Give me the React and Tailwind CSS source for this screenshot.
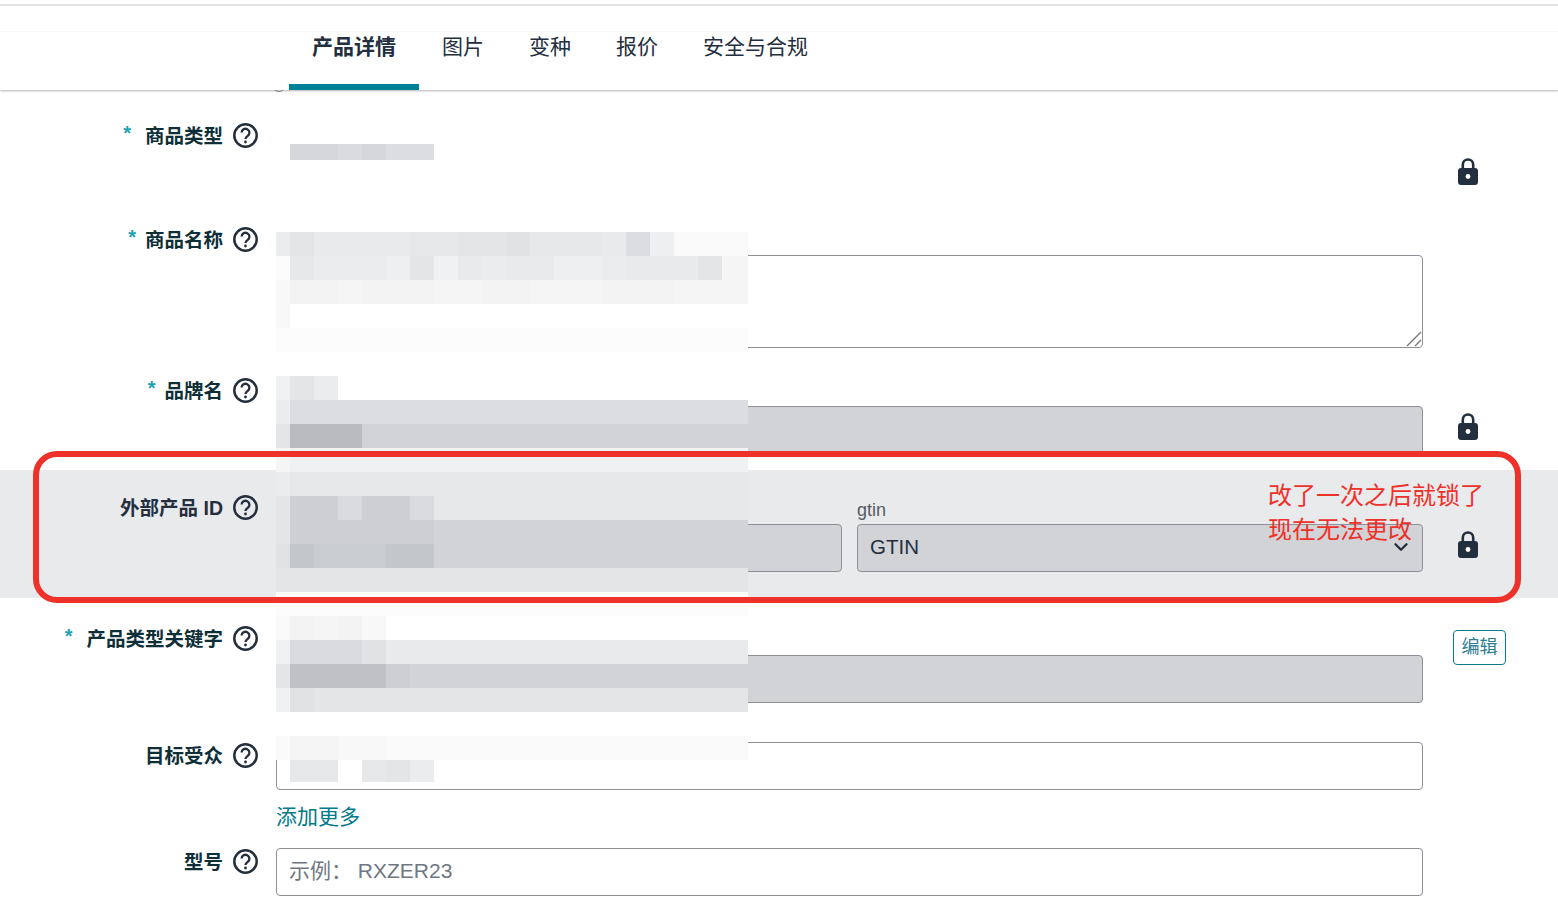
import React from 'react';
import { ChevronDown } from 'lucide-react';

// one letter = one mosaic cell of the blurred-out parts
const shades = {
  '.': 'bg-transparent',
  w: 'bg-[#ffffff]',
  x: 'bg-[#fcfcfc]',
  y: 'bg-[#fafafb]',
  z: 'bg-[#f8f8f9]',
  u: 'bg-[#f5f5f6]',
  v: 'bg-[#f3f3f4]',
  t: 'bg-[#f0f1f3]',
  s: 'bg-[#eeeff1]',
  r: 'bg-[#ebecee]',
  q: 'bg-[#e9eaec]',
  p: 'bg-[#e7e8ea]',
  o: 'bg-[#e4e5e7]',
  n: 'bg-[#e1e2e4]',
  m: 'bg-[#dcdde0]',
  l: 'bg-[#dadbde]',
  k: 'bg-[#d6d7da]',
  j: 'bg-[#d1d3d7]',
  i: 'bg-[#cdcfd2]',
  h: 'bg-[#c9ccd0]',
  g: 'bg-[#c3c6ca]',
  f: 'bg-[#bfc1c6]',
  e: 'bg-[#b9bbc0]',
};

const Mosaic = ({ rows, className }) => (
  <div className={`absolute left-[276px] w-[472px] overflow-hidden z-20 ${className}`}>
    {rows.map((row, i) => (
      <div key={i} className="flex h-6">
        {row.split('').map((c, j) => (
          <div
            key={j}
            className={`${shades[c]} ${j === 0 ? 'w-[14px]' : j === 19 ? 'flex-1' : 'w-6'}`}
          />
        ))}
      </div>
    ))}
  </div>
);

const Lock = () => (
  <svg width="20" height="27" viewBox="0 0 20 27" className="block">
    <path d="M4.8 11V6.7a5.2 5.2 0 0 1 10.4 0V11" fill="none" stroke="#232f3e" strokeWidth="2.6" />
    <rect x="0" y="10" width="20" height="17" rx="3" fill="#232f3e" />
    <circle cx="10" cy="18.5" r="2.4" fill="#fff" />
  </svg>
);

const Help = () => (
  <svg width="27" height="27" viewBox="0 0 27 27" className="ml-[9px] shrink-0">
    <circle cx="13.5" cy="13.5" r="11.2" fill="none" stroke="#232f3e" strokeWidth="2.5" />
    <path
      d="M9.6 10.6a3.9 3.9 0 1 1 6.2 3.2c-1.4 1-2.3 1.6-2.3 3.2"
      fill="none"
      stroke="#232f3e"
      strokeWidth="2.3"
    />
    <circle cx="13.5" cy="20" r="1.4" fill="#232f3e" />
  </svg>
);

const Label = ({ text, required, gap, color = 'text-[#0f2f38]' }) => (
  <div className="flex w-[259px] h-[27px] items-center justify-end">
    {required && (
      <span className={`text-[#1aa3b3] text-[20px] font-bold leading-[20px] -mt-[6px] ${gap}`}>*</span>
    )}
    <span className={`text-[19.5px] font-bold leading-[27px] mt-[2px] whitespace-nowrap ${color}`}>{text}</span>
    <Help />
  </div>
);

const inputBase = 'h-12 border border-[#8d9096] rounded-[4px]';

const Tab = ({ children, active }) => (
  <div
    className={`h-[58px] leading-[30px] text-[21px] text-[#232f3e] border-b-[6px] ${
      active ? 'px-[23px] font-bold border-[#008296]' : 'pl-[23px] pr-[22px] border-transparent'
    }`}
  >
    {children}
  </div>
);

export default function App() {
  return (
    <div className="relative w-[1558px] h-[904px] overflow-hidden bg-white font-['Liberation_Sans','Noto_Sans_CJK_SC',sans-serif]">
      {/* peeks out from under the tab bar */}
      <div className="absolute left-[272px] top-[78px] w-[14px] h-[14px] rounded-full border border-[#8d8d8d]" />

      <header className="relative z-10 h-[90px] bg-white shadow-[0_1px_2px_rgba(0,0,0,0.3)]">
        <div className="h-1" />
        <div className="h-[2px] bg-[#e3e3e3]" />
        <div className="h-[25px]" />
        <div className="h-px bg-[#f8f8f8]" />
        <nav className="flex pl-[289px]">
          <Tab active>产品详情</Tab>
          <Tab>图片</Tab>
          <Tab>变种</Tab>
          <Tab>报价</Tab>
          <Tab>安全与合规</Tab>
        </nav>
      </header>

      {/* 商品类型 */}
      <section className="flex h-[126px] pt-[32px]">
        <Label text="商品类型" required gap="mr-[14px]" />
        <div className="w-[1147px] ml-[17px]" />
        <div className="pl-[35px] pt-[36px]">
          <Lock />
        </div>
      </section>

      {/* 商品名称 */}
      <section className="flex h-[150px] pt-[10px]">
        <Label text="商品名称" required gap="mr-[9px]" />
        <div className="w-[1147px] ml-[17px] pt-[29px]">
          <div className="relative h-[93px] border border-[#8d9096] rounded-[4px]">
            <svg width="16" height="16" viewBox="0 0 16 16" className="absolute right-0 bottom-0">
              <path d="M1 15 15 1M9 15l6-6" fill="none" stroke="#777" strokeWidth="1.4" />
            </svg>
          </div>
        </div>
      </section>

      {/* 品牌名 */}
      <section className="flex h-[104px] pt-[11px]">
        <Label text="品牌名" required gap="mr-[9px]" />
        <div className="w-[1147px] ml-[17px] pt-[29px]">
          <div className={`${inputBase} bg-[#d1d3d7]`} />
        </div>
        <div className="pl-[35px] pt-[36px]">
          <Lock />
        </div>
      </section>

      {/* 外部产品 ID */}
      <section className="flex h-[128px] pt-[24px] bg-[#e9eaec]">
        <Label text="外部产品 ID" color="text-[#232f3e]" />
        <div className="flex w-[1147px] ml-[17px] gap-[15px] pt-[6px]">
          <div className="flex-1 pt-[24px]">
            <div className={`${inputBase} bg-[#d1d3d7]`} />
          </div>
          <div className="flex-1">
            <div className="h-6 leading-[20px] text-[18px] text-[#565c66]">gtin</div>
            <div className={`${inputBase} bg-[#d1d3d7] flex items-center justify-between pl-[12px] pr-[10px]`}>
              <span className="text-[20.5px] text-[#232f3e] -mt-px">GTIN</span>
              <ChevronDown size={22} strokeWidth={2.6} className="text-[#232f3e] mt-[-2px]" />
            </div>
          </div>
        </div>
        <div className="pl-[35px] pt-[37px]">
          <Lock />
        </div>
      </section>

      {/* 产品类型关键字 */}
      <section className="flex h-[134px] pt-[27px]">
        <Label text="产品类型关键字" required gap="mr-[14px]" />
        <div className="w-[1147px] ml-[17px] pt-[30px]">
          <div className={`${inputBase} bg-[#d1d3d7]`} />
        </div>
        <div className="pl-[30px] pt-[5px]">
          <button className="w-[53px] h-[35px] border border-[#0e7a8a] rounded-[4px] text-[18px] leading-[33px] text-[#2c7d8e]">
            编辑
          </button>
        </div>
      </section>

      {/* 目标受众 */}
      <section className="flex h-[106px] pt-[10px]">
        <Label text="目标受众" />
        <div className="w-[1147px] ml-[17px]">
          <div className={inputBase} />
          <div className="mt-[13px] text-[21px] leading-[28px] text-[#007a8a]">添加更多</div>
        </div>
      </section>

      {/* 型号 */}
      <section className="flex h-[66px] pt-[10px]">
        <Label text="型号" />
        <div className="w-[1147px] ml-[17px]">
          <div className={`${inputBase} flex items-center pl-[12px] pb-[2px] text-[21px] text-[#6f7782]`}>示例： RXZER23</div>
        </div>
      </section>

      {/* blurred-out values */}
      <Mosaic className="top-[144px] h-4" rows={['.kklkmm.............']} />
      <Mosaic
        className="top-[232px] h-[120px]"
        rows={[
          'roqqqqppoonpppqmsyyy',
          'xprrrsotqrqqssrqqqou',
          'zvvuvvvuuvvuuuvvvuuu',
          'zwwwwwwwwwwwwwwwwwww',
          'xxxxxxxxxxxxxxxxxxxx',
        ]}
      />
      <Mosaic
        className="top-[376px] h-[336px]"
        rows={[
          'tor.................',
          'rmmmmmmmmmmmmmmmmmmm',
          'oeeejjjjjjjjjjjjjjjj',
          'uttttttttttttttttttt',
          'rppppppppppppppppppp',
          'oiiliilppppppppppppp',
          'oiiiiiijjjjjjjjjjjjj',
          'nghhhggjjjjjjjjjjjjj',
          'oooooooooooooooooooo',
          'xxxxxxxxxxxxxxxxxxxx',
          'yvuvz...............',
          'tlllnqqqqqqqqqqqqqqq',
          'offffijjjjjjjjjjjjjj',
          'tnoooooooooooooooooo',
        ]}
      />
      <Mosaic
        className="top-[736px] h-[46px]"
        rows={['yuuzzyyyyyyyyyyyyyyy', '.pp.por.............']}
      />

      {/* red annotation drawn on top of the screenshot */}
      <div className="absolute z-30 left-[33px] top-[451px] w-[1488px] h-[152px] border-[6px] border-[#ee3129] rounded-[24px]" />
      <div className="absolute z-30 left-[1268px] top-[479px] text-[24px] leading-[34px] text-[#ee3129] whitespace-nowrap">
        <div>改了一次之后就锁了</div>
        <div>现在无法更改</div>
      </div>
    </div>
  );
}
